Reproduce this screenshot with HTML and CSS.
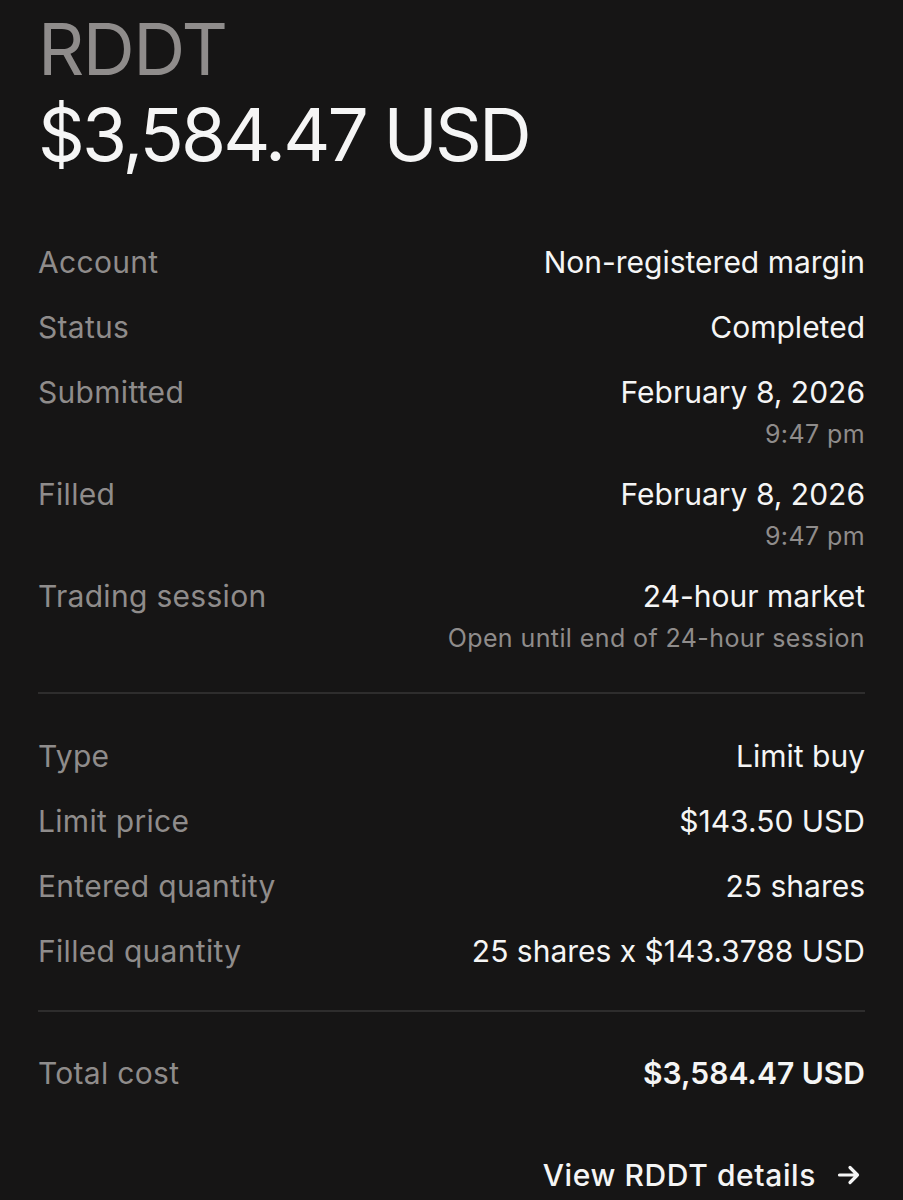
FILE: index.html
```html
<!DOCTYPE html>
<html>
<head>
    <title>RDDT Order</title>
    <link rel="stylesheet" href="styles.css">
</head>
<body>
    <div class="container">
        <div class="header">
            <h1 class="symbol">RDDT</h1>
            <h2 class="amount">$3,584.47 USD</h2>
        </div>

        <div class="section">
            <div class="row">
                <span class="label">Account</span>
                <div class="value">Non-registered margin</div>
            </div>
            <div class="row">
                <span class="label">Status</span>
                <div class="value">Completed</div>
            </div>
            <div class="row">
                <span class="label">Submitted</span>
                <div class="value">
                    February 8, 2026
                    <div class="sub">9:47 pm</div>
                </div>
            </div>
            <div class="row">
                <span class="label">Filled</span>
                <div class="value">
                    February 8, 2026
                    <div class="sub">9:47 pm</div>
                </div>
            </div>
            <div class="row">
                <span class="label">Trading session</span>
                <div class="value">
                    24-hour market
                    <div class="sub">Open until end of 24-hour session</div>
                </div>
            </div>
        </div>

        <div class="section">
            <div class="row">
                <span class="label">Type</span>
                <div class="value">Limit buy</div>
            </div>
            <div class="row">
                <span class="label">Limit price</span>
                <div class="value">$143.50 USD</div>
            </div>
            <div class="row">
                <span class="label">Entered quantity</span>
                <div class="value">25 shares</div>
            </div>
            <div class="row">
                <span class="label">Filled quantity</span>
                <div class="value">25 shares x $143.3788 USD</div>
            </div>
        </div>

        <div class="section last">
            <div class="row">
                <span class="label">Total cost</span>
                <div class="value strong">$3,584.47 USD</div>
            </div>
        </div>

        <a class="details-link" href="#">
            View RDDT details
            <svg width="24" height="24" viewBox="0 0 24 24" fill="none" stroke="#f5f5f5" stroke-width="3.2" stroke-linecap="round" stroke-linejoin="round">
                <path d="M2.5 12h18M13 4.5L20.5 12 13 19.5"/>
            </svg>
        </a>
    </div>
</body>
</html>
```

FILE: styles.css
```css
* {
    margin: 0;
    padding: 0;
    box-sizing: border-box;
    font-family: 'Inter', 'Liberation Sans', sans-serif;
}

body {
    background-color: #161515;
    color: #f5f5f5;
}

.container {
    padding: 0 38px;
}

.header {
    padding-top: 6px;
    margin-bottom: 22px;
}

.symbol {
    color: #8f8c8b;
    font-size: 72px;
    font-weight: 400;
    line-height: 86px;
    letter-spacing: -1.5px;
}

.amount {
    color: #f5f5f5;
    font-size: 73px;
    font-weight: 400;
    line-height: 86px;
    letter-spacing: -2.9px;
}

.section {
    padding: 30px 0 26px;
    border-bottom: 2px solid #2e2d2d;
}

.section.last {
    padding-top: 29px;
    border-bottom: none;
}

.row {
    display: flex;
    justify-content: space-between;
    align-items: flex-start;
    padding: 13px 0 14px;
}

.label {
    color: #8f8c8b;
    font-size: 30px;
    line-height: 38px;
    letter-spacing: 0.3px;
}

.value {
    color: #f5f5f5;
    font-size: 30px;
    line-height: 38px;
    text-align: right;
}

.value.strong {
    font-weight: 600;
}

.sub {
    color: #8f8c8b;
    font-size: 25px;
    line-height: 28px;
    margin-top: 9px;
    letter-spacing: 0.4px;
}

.details-link {
    display: flex;
    justify-content: flex-end;
    align-items: center;
    gap: 21px;
    margin-top: 25px;
    color: #f5f5f5;
    font-size: 30px;
    font-weight: 500;
    letter-spacing: 0.6px;
    text-decoration: none;
    padding-right: 4px;
}
```
